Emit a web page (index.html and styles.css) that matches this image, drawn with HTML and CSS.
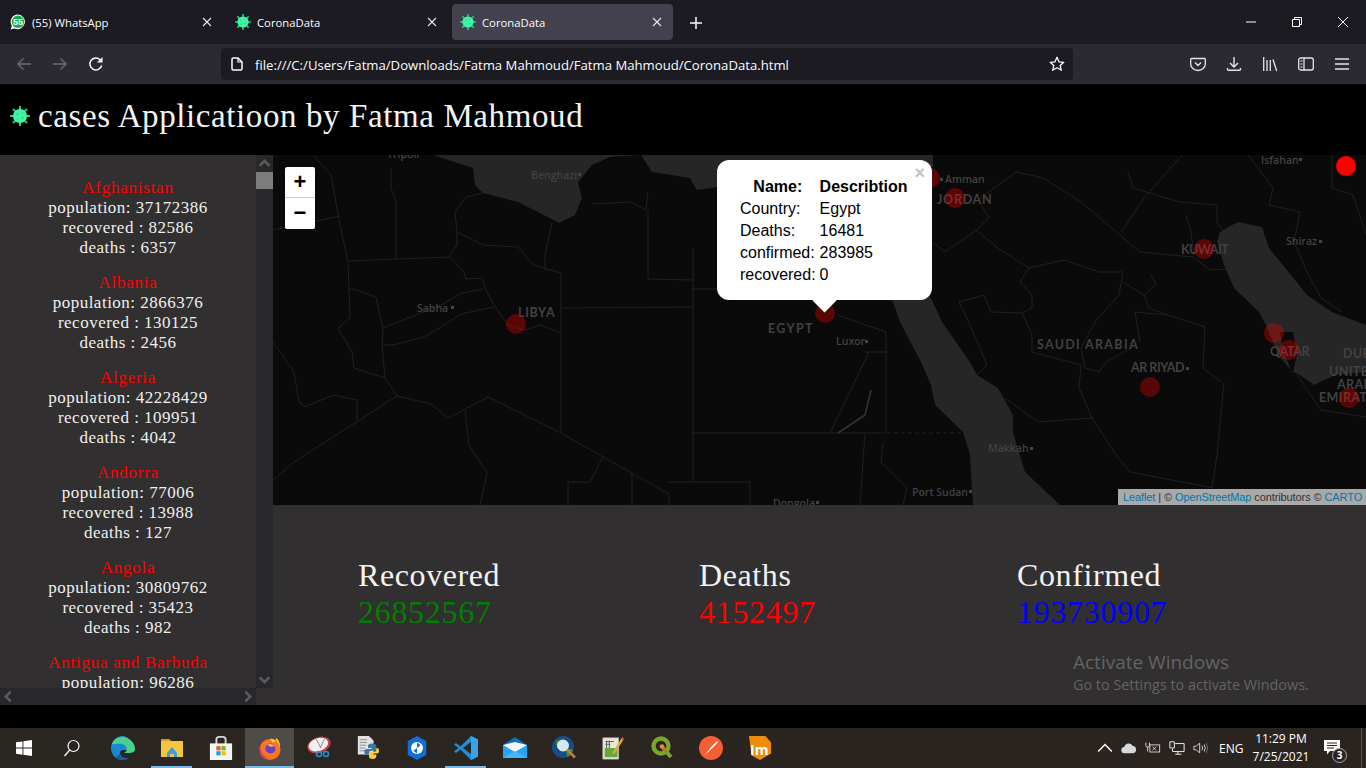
FILE: index.html
```html
<!DOCTYPE html>
<html lang="en">
<head>
<meta charset="utf-8">
<title>CoronaData</title>
<link rel="stylesheet" href="styles.css">
</head>
<body>
<svg class="defs" width="0" height="0" aria-hidden="true">
  <symbol id="virus" viewBox="0 0 20 20">
    <g stroke="#25c985" stroke-width="2" stroke-linecap="square">
      <path d="M10 1v18M1 10h18M3.600 3.600l12.800 12.800M16.400 3.600L3.600 16.400"/>
    </g>
    <circle cx="10" cy="10" r="7" fill="#40f5a4"/>
    <circle cx="7.500" cy="8" r="1" fill="#2bd587"/><circle cx="12.500" cy="12" r="1" fill="#2bd587"/><circle cx="12" cy="7" r=".8" fill="#2bd587"/><circle cx="7.500" cy="13" r=".8" fill="#2bd587"/>
  </symbol>
  <symbol id="closex" viewBox="0 0 10 10"><path d="M1 1l8 8M9 1l-8 8" stroke="#e8e8ea" stroke-width="1.100" fill="none"/></symbol>
  <symbol id="chev" viewBox="-2 -2 14 14"><path d="M1 6.800L5 2.800l4 4" stroke="#5a5a5c" stroke-width="2.200" fill="none"/></symbol>
</svg>

<div class="tabbar">
  <div class="tab">
    <svg class="fav" viewBox="0 0 16 16"><path d="M8 .5a7.300 7.300 0 0 0-6.200 11.200L.7 15.400l3.800-1A7.300 7.300 0 1 0 8 .5z" fill="#fff"/><circle cx="8" cy="7.800" r="6.200" fill="#10b14d"/></svg>
    <span class="fav-num">55</span>
    <span class="tab-label">(55) WhatsApp</span>
    <svg class="tab-close"><use href="#closex"/></svg>
  </div>
  <div class="tab">
    <svg class="fav"><use href="#virus"/></svg>
    <span class="tab-label">CoronaData</span>
    <svg class="tab-close"><use href="#closex"/></svg>
  </div>
  <div class="tab tab-active">
    <svg class="fav"><use href="#virus"/></svg>
    <span class="tab-label">CoronaData</span>
    <svg class="tab-close"><use href="#closex"/></svg>
  </div>
  <svg class="newtab" viewBox="0 0 12 12"><path d="M6 0v12M0 6h12" stroke="#fbfbfe" stroke-width="1.500"/></svg>
  <div class="winbtns">
    <svg viewBox="0 0 12 12"><path d="M1 6h10" stroke="#fff" stroke-width="1"/></svg>
    <svg viewBox="0 0 12 12"><path d="M1.500 3.500h7v7h-7zM3.500 3.500v-2h7v7h-2" stroke="#fff" stroke-width="1" fill="none"/></svg>
    <svg viewBox="0 0 12 12"><path d="M1 1l10 10M11 1L1 11" stroke="#fff" stroke-width="1"/></svg>
  </div>
</div>

<div class="toolbar">
  <svg class="navicon" viewBox="0 0 16 16"><path d="M15 8H2M7.500 2.500L2 8l5.500 5.500" stroke="#6d6c74" stroke-width="1.400" fill="none"/></svg>
  <svg class="navicon" viewBox="0 0 16 16"><path d="M1 8h13M8.500 2.500L14 8l-5.500 5.500" stroke="#6d6c74" stroke-width="1.400" fill="none"/></svg>
  <svg class="navicon" viewBox="0 0 16 16"><path d="M13.700 9.500A6 6 0 1 1 12.200 3.700" stroke="#fbfbfe" stroke-width="1.500" fill="none"/><path d="M14.500 1v5.500H9z" fill="#fbfbfe"/></svg>
  <div class="urlbar">
    <svg class="pageicon" viewBox="0 0 12 14"><path d="M1 2.200Q1 1 2.200 1H7l4 4v6.800q0 1.200-1.200 1.200H2.200Q1 13 1 11.800z" fill="none" stroke="#fbfbfe" stroke-width="1.500"/><path d="M7 1v4h4" fill="none" stroke="#fbfbfe" stroke-width="1.200"/></svg>
    <span class="url">file:///C:/Users/Fatma/Downloads/Fatma Mahmoud/Fatma Mahmoud/CoronaData.html</span>
    <svg class="star" viewBox="0 0 16 16"><path d="M8 1.300l2 4.500 4.800.5-3.600 3.200 1.100 4.800L8 11.800l-4.300 2.500 1.100-4.800L1.200 6.300 6 5.800z" fill="none" stroke="#fbfbfe" stroke-width="1.300" stroke-linejoin="round"/></svg>
  </div>
  <div class="toolicons">
    <svg viewBox="0 0 16 16"><path d="M1.500 2.500h13a.8.8 0 0 1 .8.8V8a7.300 6.500 0 0 1-14.600 0V3.300a.8.8 0 0 1 .8-.8z" fill="none" stroke="#e4e4e8" stroke-width="1.300"/><path d="M5 6.500l3 3 3-3" fill="none" stroke="#e4e4e8" stroke-width="1.400"/></svg>
    <svg viewBox="0 0 16 16"><path d="M8 1v10M4 7l4 4 4-4" fill="none" stroke="#e4e4e8" stroke-width="1.400"/><path d="M1.500 12v1.300q0 1 1 1h11q1 0 1-1V12" fill="none" stroke="#e4e4e8" stroke-width="1.400"/></svg>
    <svg viewBox="0 0 16 16"><path d="M1.700 1v14M5 4v11M8.300 4v11M11 3.500L14.700 15" fill="none" stroke="#e4e4e8" stroke-width="1.300"/></svg>
    <svg viewBox="0 0 16 16"><rect x=".7" y="2" width="14.600" height="12" rx="2" fill="none" stroke="#e4e4e8" stroke-width="1.300"/><path d="M6 2v12" stroke="#e4e4e8" stroke-width="1.300"/><path d="M2.300 5h2.300M2.300 8h2.300M2.300 11h2.300" stroke="#e4e4e8" stroke-width="1.100"/></svg>
    <svg viewBox="0 0 16 16"><path d="M1 3h14M1 8h14M1 13h14" stroke="#e4e4e8" stroke-width="1.300"/></svg>
  </div>
</div>

<header class="site-head">
  <svg class="head-icon"><use href="#virus"/></svg>
  <h1 class="head-title">cases Applicatioon by Fatma Mahmoud</h1>
</header>

<main class="app">
  <aside class="side">
    <div class="side-body">
      <div class="side-list">
        <div class="country"><div class="country-name">Afghanistan</div><div>population: 37172386</div><div>recovered : 82586</div><div>deaths : 6357</div></div>
        <div class="country"><div class="country-name">Albania</div><div>population: 2866376</div><div>recovered : 130125</div><div>deaths : 2456</div></div>
        <div class="country"><div class="country-name">Algeria</div><div>population: 42228429</div><div>recovered : 109951</div><div>deaths : 4042</div></div>
        <div class="country"><div class="country-name">Andorra</div><div>population: 77006</div><div>recovered : 13988</div><div>deaths : 127</div></div>
        <div class="country"><div class="country-name">Angola</div><div>population: 30809762</div><div>recovered : 35423</div><div>deaths : 982</div></div>
        <div class="country"><div class="country-name">Antigua and Barbuda</div><div>population: 96286</div></div>
      </div>
      <div class="vbar">
        <svg class="sb-btn"><use href="#chev"/></svg>
        <div class="vthumb"></div>
        <div class="sb-fill"></div>
        <svg class="sb-btn sb-down"><use href="#chev"/></svg>
      </div>
    </div>
    <div class="hbar">
      <div class="hbar-track">
        <svg class="sb-btn sb-left"><use href="#chev"/></svg>
        <svg class="sb-btn sb-right"><use href="#chev"/></svg>
      </div>
      <div class="corner"></div>
    </div>
  </aside>

  <section class="content">
    <div class="map">
      <svg class="map-art" viewBox="0 0 1093 350">
        <g class="water">
          <path d="M160 0L200 13 202 30 210 38 245 47 267 58 286 68 302 60 309 43 305 27 319 10 337 2 368 0 379 17 417 23 424 35 445 32 500 25 660 12 660 0z"/>
          <path d="M600 100L658 143 669 167 697 207 704 220 725 233 740 260 740 277 752 317 787 350 700 350 697 300 690 277 662 250 658 230 648 207 627 167 620 147z"/>
          <path d="M944 87L947 77 955 72 965 67 989 72 996 93 1034 140 1059 157 1093 170 1093 217 1062 220 1041 230 1027 220 1020 217 1024 200 1020 177 1007 177 993 170 986 157 961 133 951 110z"/>
          <path d="M993 170L1007 177 1010 195 1018 215 1005 200z"/>
        </g>
        <g class="borders">
          <path d="M40 0L58 20 67 70 75 107 77 163 65 173 79 197 81 213 112 223 124 241 158 249 175 263 215 242 288 278 330 302 396 339"/>
          <path d="M124 241L21 307 0 325M288 118V278M420 93V327M288 153L420 152M420 134H445M420 278H530M396 339V350M396 327H477V350"/>
          <path d="M76 106L177 102M123 103V47L118 33V13M177 102L191 117 193 124 210 123 212 133 221 150 235 170 252 175 267 170 288 178"/>
          <path d="M177 100L184 90 184 77 210 90 245 92 260 110 288 118M184 77L182 57 193 42 210 38M279 67L272 100V115M375 55V124L420 125M375 37L373 55 358 47 319 49"/>
          <path d="M221 152L188 159 168 172 151 182 121 190 110 190M210 134L189 138 168 150 110 173 109 190 112 223M77 133L103 142 110 173"/>
          <path d="M0 75L67 61M0 187L21 217 26 247 32 252 60 240 84 245V265M192 255L196 290 214 318 207 350M330 302L317 327H295V350M359 318V350"/>
          <path d="M744 17L770 23 808 47 867 97 920 102 937 115 953 114M660 87L672 97 704 75 716 62 705 45 739 20 744 17"/>
          <path d="M704 76L725 93 756 113 791 105 826 117 850 117 846 140 822 167 808 193 812 213 826 217 833 207 864 190"/>
          <path d="M756 113L747 127 759 140 759 153 749 158 759 180 759 197 808 210 806 233 819 263 765 267 732 243"/>
          <path d="M948 227L930 213 932 172 895 160 862 157 867 187M951 227L944 300 939 333M850 127L871 140 883 129 878 120M871 140L876 153 895 160M686 147L711 140 718 157 749 158M686 147L697 170 714 210 704 220M819 263L843 300 857 317 940 333"/>
          <path d="M855 17L860 33 906 47 944 50 944 67 951 77M848 77L871 43 909 0M913 60L918 77 921 100M975 0L1000 33 996 50 1027 57 1021 87 1034 117 1048 143 1069 157M1093 80L1080 40 1059 33 1059 0"/>
          <path d="M1024 220L1048 255 1093 262M592 278L587 350M610 287L608 307 634 333 630 350M592 197H613V278M596 197L557 278M564 160L613 177V197M530 278H607"/>
          <path d="M607 278H690" stroke-dasharray="4 3"/>
          <path class="lake" d="M598 235L592 260 565 278"/>
        </g>
        <g class="labels">
          <text x="258" y="24">Benghazi</text>
          <text x="114" y="3">Tripoli</text>
          <text x="144" y="157">Sabha</text>
          <text x="563" y="190">Luxor</text>
          <text x="715" y="297">Makkah</text>
          <text x="639" y="341">Port Sudan</text>
          <text x="500" y="352">Dongola</text>
          <text x="988" y="9">Isfahan</text>
          <text x="1013" y="90">Shiraz</text>
          <text x="672" y="28">Amman</text>
        </g>
        <g class="towns">
          <rect x="305" y="18" width="3" height="3"/><rect x="178" y="151" width="3" height="3"/><rect x="592" y="185" width="3" height="3"/>
          <rect x="757" y="292" width="3" height="3"/><rect x="696" y="335" width="3" height="3"/><rect x="543" y="346" width="3" height="3"/>
          <rect x="1026" y="3" width="3" height="3"/><rect x="1046" y="85" width="3" height="3"/><rect x="913" y="212" width="3" height="3"/><rect x="667" y="23" width="3" height="3"/>
        </g>
        <g class="labels labels-big">
          <text x="245" y="162" textLength="37">LIBYA</text>
          <text x="495" y="178" textLength="45">EGYPT</text>
          <text x="664" y="49" textLength="55">JORDAN</text>
          <text x="908" y="99" textLength="48">KUWAIT</text>
          <text x="764" y="194" textLength="101">SAUDI ARABIA</text>
          <text x="858" y="217" textLength="54">AR RIYAD</text>
          <text x="997" y="201" textLength="40">QATAR</text>
          <text x="1070" y="203">DUB</text>
          <text x="1056" y="221">UNITE</text>
          <text x="1064" y="234">ARAB</text>
          <text x="1046" y="247">EMIRAT</text>
        </g>
        <g class="dots">
          <circle cx="243" cy="169" r="10"/><circle cx="552" cy="158" r="10"/><circle cx="682" cy="43" r="10"/>
          <circle cx="931" cy="94" r="10"/><circle cx="877" cy="232" r="10"/><circle cx="1001" cy="178" r="10"/>
          <circle cx="1016" cy="195" r="10"/><circle cx="1076" cy="243" r="10"/><circle cx="657" cy="23" r="10"/>
        </g>
        <circle class="dot-solid" cx="1073" cy="11" r="10"/>
      </svg>

      <div class="zoombox">
        <div class="zoom-btn zoom-in">+</div>
        <div class="zoom-btn">&#8722;</div>
      </div>

      <div class="popup">
        <span class="popup-x">&#215;</span>
        <table class="popup-table">
          <tr><th>Name:</th><th>Describtion</th></tr>
          <tr><td>Country:</td><td>Egypt</td></tr>
          <tr><td>Deaths:</td><td>16481</td></tr>
          <tr><td>confirmed:</td><td>283985</td></tr>
          <tr><td>recovered:</td><td>0</td></tr>
        </table>
        <div class="popup-tip"></div>
      </div>

      <div class="attrib"><a>Leaflet</a> | © <a>OpenStreetMap</a> contributors © <a>CARTO</a></div>
    </div>

    <div class="stats">
      <div class="stat stat-a"><div class="stat-title">Recovered</div><div class="stat-num green">26852567</div></div>
      <div class="stat stat-b"><div class="stat-title">Deaths</div><div class="stat-num red">4152497</div></div>
      <div class="stat"><div class="stat-title">Confirmed</div><div class="stat-num blue">193730907</div></div>
      <div class="activate"><div class="activate-big">Activate Windows</div><div class="activate-small">Go to Settings to activate Windows.</div></div>
    </div>
  </section>
</main>

<div class="gap"></div>

<footer class="taskbar">
  <div class="task-slot slot-start"><svg viewBox="0 0 16 16"><path d="M0 2.300l6.500-.9v6.200H0zM7.400 1.300L16 0v7.600H7.400zM0 8.500h6.500v6.200L0 13.800zM7.400 8.500H16V16l-8.600-1.200z" fill="#fff"/></svg></div>
  <div class="task-slot slot-search"><svg viewBox="0 0 18 18"><circle cx="10.500" cy="7" r="5.500" fill="none" stroke="#fff" stroke-width="1.200"/><path d="M6.700 11L1.500 17" stroke="#fff" stroke-width="1.300"/></svg></div>
  <div class="task-slot"><svg viewBox="0 0 24 24"><path d="M12 0a12 12 0 0 0-12 12c0 7 5.500 12 11 12 3 0 5-1 7-2-4 1-9-1-9-5 0-2 1.500-3 3-3h9c1-5-3-14-9-14z" fill="#1b86d2"/><path d="M1 8c2-5 7-8 12-7 6 1 11 6 11 12 0 3-3 4-6 4h-5c4-1 4-8-2-9-5-1-8 1-10 0z" fill="#47d38c"/><path d="M9 17c0 4 5 6 9 5-2 1.300-4 2-7 2-3 0-5.500-1.500-7-4 1 .5 4 .5 5-3z" fill="#0f5ea8"/></svg></div>
  <div class="task-slot slot-on"><svg viewBox="0 0 24 20"><path d="M1 1h8l2 2h12v16H1z" fill="#f4c63f"/><path d="M1 1h8l2 2H1z" fill="#d99a1e"/><path d="M7 15l5-6 5 6v4h-3v-3h-4v3H7z" fill="#3f9ae0"/></svg></div>
  <div class="task-slot"><svg viewBox="0 0 24 26"><path d="M7 9V4q0-3 3-3h4q3 0 3 3v5" fill="none" stroke="#d8d8d8" stroke-width="2"/><rect y="8" width="24" height="18" fill="#f5f5f5"/><rect x="7" y="11" width="4.500" height="4.500" fill="#e4572e"/><rect x="12.500" y="11" width="4.500" height="4.500" fill="#7fba00"/><rect x="7" y="16.500" width="4.500" height="4.500" fill="#1b9ce2"/><rect x="12.500" y="16.500" width="4.500" height="4.500" fill="#ffb900"/></svg></div>
  <div class="task-slot slot-active slot-on"><svg viewBox="0 0 24 24"><circle cx="12" cy="13.500" r="10.500" fill="#f9761f"/><path d="M12 3c4-1 9 3 10 9 .6-4-1-8-4-10 0 2-1 4-3 5-1-2-2-3-3-4z" fill="#ffc53a"/><path d="M2 8c0 5 2 13 10 15-6 0-10-4-10-9z" fill="#ee2a7b"/><circle cx="12.500" cy="12.500" r="5" fill="#6b3fc4"/><path d="M9 9c3-2 7-1 8 2-1-1-3-1-4 0z" fill="#ffb33a"/></svg></div>
  <div class="task-slot"><svg viewBox="0 0 24 24"><ellipse cx="12" cy="9" rx="12" ry="8" transform="rotate(-18 12 9)" fill="#c33c48"/><ellipse cx="11.500" cy="8.500" rx="10" ry="6.500" transform="rotate(-18 12 9)" fill="#f1f1ef"/><path d="M9 3l5 9M18 2l-5 10" stroke="#8b8b8b" stroke-width="1"/><circle cx="12" cy="18" r="2.500" fill="none" stroke="#2b8ed0" stroke-width="1.600"/><circle cx="19" cy="18" r="2.500" fill="none" stroke="#2b8ed0" stroke-width="1.600"/></svg></div>
  <div class="task-slot"><svg viewBox="0 0 24 26"><path d="M1 0h12l5 5v15H1z" fill="#e3e3e3"/><path d="M3 4h8M3 7h8M3 10h7M3 13h6M3 16h6" stroke="#8a8a8a" stroke-width="1"/><path d="M16 8q-4 0-4 3v2h4v1h-5q-3 0-3 3t3 3h2v-2q0-2 3-2h3q2 0 2-2v-3q0-3-5-3z" fill="#3a76a8"/><path d="M17 25q4 0 4-3v-2h-4v-1h5q2 0 2-3t-2-3h-1v2q0 2-3 2h-3q-2 0-2 2v3q0 3 4 3z" fill="#f5cc42"/></svg></div>
  <div class="task-slot"><svg viewBox="0 0 22 26"><path d="M11 0l10 5.500v15L11 26 1 20.500v-15z" fill="#0e6fd6"/><circle cx="11" cy="13" r="6.500" fill="#fff"/><path d="M11 7v6l4-3zM11 19v-6l-4 3z" fill="#0e6fd6"/></svg></div>
  <div class="task-slot slot-on"><svg viewBox="0 0 24 24"><path d="M17 0l7 3.500v17L17 24 6.500 13.500 2 17 0 15.500 4.500 12 0 8.500 2 7l4.500 3.500z" fill="#1e8ed9"/><path d="M17 6v12l-8-6z" fill="#2b2622"/><path d="M17 0l7 3.500v17L17 24z" fill="#36a4e8"/></svg></div>
  <div class="task-slot"><svg viewBox="0 0 24 24"><path d="M12 1L24 9v13H0V9z" fill="#0c6fc4"/><path d="M0 9h24v13H0z" fill="#26a5ee"/><path d="M0 9l12 7 12-7-12-3z" fill="#f2f7fb"/><path d="M0 22l12-7 12 7z" fill="#46b6f5"/></svg></div>
  <div class="task-slot"><svg viewBox="0 0 24 24"><circle cx="11" cy="11" r="11" fill="#164d86"/><path d="M4 5q5-3 9 1-3 5-9 3zM14 14q5-2 7 0-2 6-6 7z" fill="#3f8f3a"/><circle cx="11" cy="9.500" r="5.500" fill="#cfeaf5" stroke="#e8e8e8" stroke-width="1"/><path d="M15 13.500l8 8" stroke="#c77a3a" stroke-width="2.600"/></svg></div>
  <div class="task-slot"><svg viewBox="0 0 24 26"><path d="M1 2h17v23H1z" fill="#e9e7d8" stroke="#bcbcbc" stroke-width=".8"/><path d="M3 13h14v10H3z" fill="#63a83a"/><path d="M4 6h9M4 9h5M5 5v8M8 5v8" stroke="#555" stroke-width="1"/><path d="M22 1L12 17l-.8 3.500 3-2L24 3z" fill="#e0a93a"/><path d="M22 1l2 2-1 1.500-2-1.800z" fill="#c5352f"/></svg></div>
  <div class="task-slot"><svg viewBox="0 0 22 24"><circle cx="10" cy="10" r="7.500" fill="none" stroke="#7da52b" stroke-width="4.400"/><path d="M12 12l8 9" stroke="#7da52b" stroke-width="4"/><circle cx="11" cy="10.500" r="2.300" fill="#e58e3a"/><path d="M12 12l3.500 4" stroke="#c76f2a" stroke-width="2.500"/></svg></div>
  <div class="task-slot"><svg viewBox="0 0 24 24"><circle cx="12" cy="12" r="12" fill="#f25f35"/><path d="M18 5q1 .8.6 1.600L11 14.500l-1.200-1zM9.800 14.300l.8.800-5 4z" fill="#fff"/></svg></div>
  <div class="task-slot slot-im"><svg viewBox="0 0 24 26"><path d="M0 0h18l6 7v12l-12 7-9-5z" fill="#ef8d0a"/></svg><span class="im-text">Im</span></div>
  <div class="tray">
    <svg class="tray-ic" viewBox="0 0 14 14"><path d="M1 10l6-6 6 6" fill="none" stroke="#fff" stroke-width="1.200"/></svg>
    <svg class="tray-ic" viewBox="0 0 18 14"><path d="M4 13a3.500 3.500 0 0 1-.3-7 5 5 0 0 1 9.300-1.500A4.500 4.500 0 0 1 17 9c0 2.500-1.500 4-4 4z" fill="#d8d8d8"/></svg>
    <svg class="tray-ic" viewBox="0 0 18 14"><path d="M1 1v3a2 2 0 0 0 4 0V1M3 6v5" fill="none" stroke="#ddd" stroke-width="1.100"/><rect x="5.500" y="3.500" width="11" height="8" fill="none" stroke="#ddd" stroke-width="1"/><path d="M8.500 5.500l4 4M12.500 5.500l-4 4" stroke="#ddd" stroke-width="1"/></svg>
    <svg class="tray-ic" viewBox="0 0 18 16"><path d="M1 1h5v7H1zM7 3h10v9H4V9M10 12v3M7 15h7" fill="none" stroke="#eee" stroke-width="1.100"/></svg>
    <svg class="tray-ic" viewBox="0 0 18 14"><path d="M1 5h2.500L7.500 1.500v11L3.500 9H1zM10 4.500q1.500 2.500 0 5M12.500 3q2.500 4 0 8" fill="none" stroke="#ddd" stroke-width="1"/><path d="M15 1.500q3 5.500 0 11" fill="none" stroke="#777" stroke-width="1"/></svg>
    <span class="tray-lang">ENG</span>
    <div class="clock"><div>11:29 PM</div><div>7/25/2021</div></div>
    <div class="notif">
      <svg viewBox="0 0 16 15"><path d="M0 0h16v11H6l-3 3.500V11H0z" fill="#fff"/><path d="M3 3h10M3 5.500h10M3 8h7" stroke="#2b2622" stroke-width="1"/></svg>
      <span class="notif-badge">3</span>
    </div>
    <div class="showdesk"></div>
  </div>
</footer>
</body>
</html>
```

FILE: styles.css
```css
* { box-sizing: border-box; }
html, body { margin: 0; padding: 0; }
body {
  width: 1366px;
  height: 768px;
  overflow: hidden;
  display: flex;
  flex-direction: column;
  background: #000;
  font-family: "Liberation Serif", serif;
}
.defs { position: absolute; }

/* tabs */
.tabbar {
  height: 44px;
  flex: none;
  background: #1c1b22;
  display: flex;
  align-items: flex-start;
  padding: 4px 0 0 2px;
  color: #fbfbfe;
  font: 11.3px "Open Sans", sans-serif;
}
.tab {
  position: relative;
  width: 221px;
  height: 36px;
  margin-right: 4px;
  display: flex;
  align-items: center;
  padding: 0 11px 0 8px;
  border-radius: 4px;
}
.tab-active { background: #42414d; }
.fav { width: 16px; height: 16px; flex: none; margin-right: 6px; }
.fav-num {
  position: absolute;
  left: 8px;
  width: 16px;
  text-align: center;
  font: bold 9px "Liberation Sans", sans-serif;
  color: #fff;
}
.tab-label { flex: 1; white-space: nowrap; }
.tab-close { width: 10px; height: 10px; flex: none; }
.newtab { width: 12px; height: 12px; margin: 13px 0 0 13px; flex: none; }
.winbtns { margin-left: auto; display: flex; padding-top: 12px; padding-right: 17px; gap: 34px; }
.winbtns svg { width: 12px; height: 12px; }

/* toolbar */
.toolbar {
  height: 40px;
  flex: none;
  background: #2b2a33;
  display: flex;
  align-items: center;
  padding-left: 16px;
}
.navicon { width: 16px; height: 16px; margin-right: 20px; flex: none; }
.urlbar {
  width: 852px;
  height: 32px;
  margin-left: 97px;
  background: #1c1b22;
  border-radius: 4px;
  display: flex;
  align-items: center;
  padding: 0 8px 0 10px;
  flex: none;
}
.pageicon { width: 12px; height: 14px; margin-right: 12px; flex: none; }
.url { flex: 1; padding-top: 1px; color: #fbfbfe; font: 13.15px "Open Sans", sans-serif; white-space: nowrap; }
.star { width: 16px; height: 16px; flex: none; }
.toolicons { display: flex; gap: 20px; margin-left: 117px; }
.toolicons svg { width: 16px; height: 16px; }

/* header */
.site-head {
  height: 71px;
  flex: none;
  background: #000;
  display: flex;
  align-items: center;
  padding: 0 0 8px 10px;
}
.head-icon { width: 20px; height: 20px; margin-right: 8px; flex: none; }
.head-title {
  margin: 0;
  font-size: 33px;
  line-height: 40px;
  font-weight: 400;
  color: #f4f4f4;
  letter-spacing: .6px;
  white-space: nowrap;
}

/* main */
.app { height: 550px; flex: none; display: flex; }
.side { width: 273px; flex: none; display: flex; flex-direction: column; background: #312f30; }
.side-body { height: 533px; flex: none; display: flex; }
.side-list {
  width: 256px;
  overflow: hidden;
  padding-top: 23px;
  text-align: center;
  font-size: 17px;
  line-height: 20px;
  letter-spacing: .5px;
  color: #efefef;
}
.country { height: 95px; }
.country-name { color: #f00; letter-spacing: .75px; }
.vbar { width: 17px; background: #28272a; display: flex; flex-direction: column; }
.sb-btn { width: 17px; height: 17px; flex: none; display: block; }
.sb-down { transform: rotate(180deg); }
.sb-left { transform: rotate(-90deg); }
.sb-right { transform: rotate(90deg); }
.vthumb { height: 17px; flex: none; background: #7d7b7c; }
.sb-fill { flex: 1; }
.hbar { height: 17px; flex: none; display: flex; }
.hbar-track { width: 256px; background: #28272a; display: flex; justify-content: space-between; }
.corner { flex: 1; background: #302e2f; }

.content { flex: 1; display: flex; flex-direction: column; min-width: 0; }
.map { position: relative; height: 350px; flex: none; background: #0a0a0a; overflow: hidden; }
.map-art { display: block; width: 1093px; height: 350px; }
.water path { fill: #262626; stroke: none; }
.borders path { fill: none; stroke: #202020; stroke-width: 1; stroke-linejoin: round; }
.borders .lake { stroke: #333; stroke-width: 1.6; }
.labels text { font: 600 10.5px "Open Sans", sans-serif; fill: #414141; }
.labels-big text { font: 700 12.5px "Lato", sans-serif; letter-spacing: .4px; fill: #414141; }
.towns rect { fill: #444; }
.dots circle { fill: #f00; opacity: .32; }
.dot-solid { fill: #f00; }

.zoombox {
  position: absolute;
  left: 12px;
  top: 12px;
  width: 30px;
  background: #fff;
  border-radius: 2px;
  overflow: hidden;
}
.zoom-btn {
  height: 30.5px;
  text-align: center;
  color: #000;
  font: bold 22px/30px "Liberation Sans", sans-serif;
}
.zoom-in { border-bottom: 1px solid #ccc; height: 31px; }

.popup {
  position: absolute;
  left: 444px;
  top: 5px;
  width: 215px;
  height: 140px;
  background: #fff;
  border-radius: 12px;
  padding: 16px 0 0 21px;
  color: #000;
  font: 16px/22px "Liberation Sans", sans-serif;
}
.popup-x {
  position: absolute;
  right: 7px;
  top: 1px;
  color: #c3c3c3;
  font: bold 18px/24px "Liberation Sans", sans-serif;
}
.popup-table { border-collapse: collapse; }
.popup-table td, .popup-table th { padding: 0 2px; height: 22px; text-align: left; white-space: nowrap; }
.popup-table th { text-align: center; }
.popup-tip {
  position: absolute;
  left: 99px;
  top: 132px;
  width: 17px;
  height: 17px;
  background: #fff;
  transform: rotate(45deg);
}

.attrib {
  position: absolute;
  right: 0;
  bottom: 0;
  width: 248px;
  height: 16px;
  padding-left: 5px;
  background: #a9a9a9;
  color: #333;
  font: 11px/16px "Liberation Sans", sans-serif;
  letter-spacing: -.1px;
  white-space: nowrap;
}
.attrib a { color: #0078a8; }

.stats {
  position: relative;
  flex: 1;
  background: #312f30;
  display: flex;
  padding: 52px 0 0 85px;
}
.stat { flex: none; }
.stat-a { width: 341px; }
.stat-b { width: 318px; }
.stat-title { font-size: 32px; line-height: 37px; color: #f2f2f2; letter-spacing: .6px; }
.stat-num { font-size: 32px; line-height: 37px; letter-spacing: .7px; }
.green { color: #008000; }
.red { color: #f00; }
.blue { color: #00f; }

.activate {
  position: absolute;
  left: 800px;
  top: 145px;
  color: #646364;
  font-family: "Open Sans", sans-serif;
}
.activate-big { font-size: 19px; line-height: 24px; }
.activate-small { font-size: 14.4px; line-height: 21px; }

.gap { height: 23px; flex: none; background: #000; }

/* taskbar */
.taskbar {
  height: 40px;
  flex: none;
  background: linear-gradient(90deg, #2a2622, #2a2420);
  display: flex;
  align-items: center;
}
.task-slot {
  position: relative;
  width: 49px;
  height: 40px;
  flex: none;
  display: flex;
  align-items: center;
  justify-content: center;
}
.task-slot svg { width: 24px; height: 24px; }
.slot-start { width: 48px; }
.slot-start svg { width: 16px; height: 16px; }
.slot-search { width: 50px; padding-right: 2px; }
.slot-search svg { width: 18px; height: 18px; }
.slot-on::after {
  content: "";
  position: absolute;
  left: 4px;
  right: 4px;
  bottom: 0;
  height: 2px;
  background: #76b9ed;
}
.slot-active { background: #4f4b47; }
.slot-active::after { left: 0; right: 0; }
.im-text {
  position: absolute;
  left: 15px;
  top: 12px;
  color: #fff;
  font: 700 14px "Open Sans", sans-serif;
}
.tray {
  margin-left: auto;
  width: 269px;
  display: flex;
  align-items: center;
  color: #fff;
  font: 12px "Open Sans", sans-serif;
  height: 40px;
}
.tray-ic { width: 16px; height: 16px; margin-right: 8px; flex: none; }
.tray-lang { margin-left: 2px; width: 28px; }
.clock { text-align: center; width: 68px; line-height: 18px; font-size: 12px; }
.notif { position: relative; width: 24px; height: 24px; margin-left: 9px; flex: none; }
.notif svg { width: 16px; height: 15px; display: block; margin-top: 4px; }
.notif-badge {
  position: absolute;
  left: 8px;
  top: 12px;
  width: 15px;
  height: 15px;
  border: 1px solid #aaa;
  border-radius: 50%;
  background: #2a2420;
  text-align: center;
  font: 700 10px/13px "Open Sans", sans-serif;
}
.showdesk { margin-left: auto; width: 1px; height: 40px; background: #5b5551; margin-right: 4px; }
```
